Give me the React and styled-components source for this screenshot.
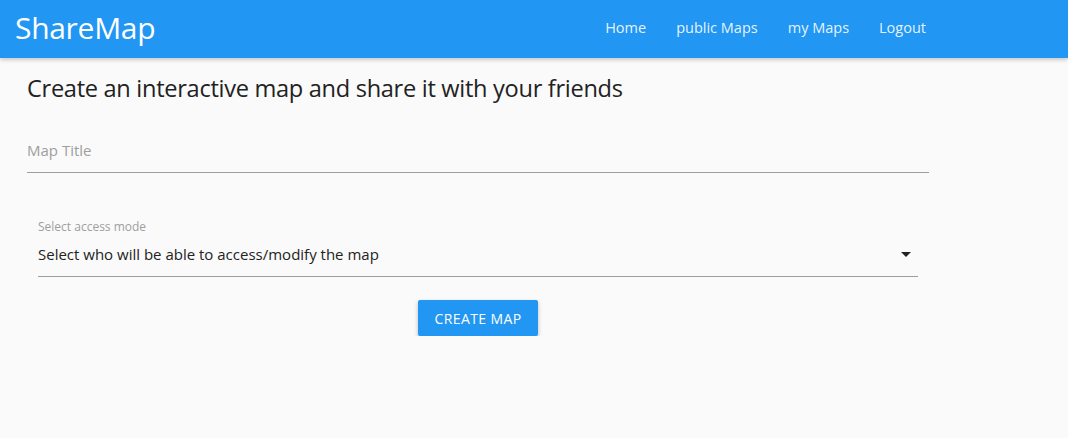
import React, { useState } from "react";
import styled, { createGlobalStyle } from "styled-components";

const GlobalStyle = createGlobalStyle`
	html, body {
		margin: 0;
		padding: 0;
		background: #fafafa;
		font-family: "Open Sans", "Noto Sans", sans-serif;
	}
`;

const AppBar = styled.header`
	height: 58px;
	background: #2196f3;
	display: flex;
	align-items: center;
	justify-content: space-between;
	padding: 0 127px 0 15px;
	box-shadow: 0 2px 4px rgba(0, 0, 0, 0.2);
`;

const Brand = styled.div`
	color: #fff;
	font-size: 30px;
	letter-spacing: -0.3px;
	line-height: 1;
	margin-top: -3px;
`;

const Nav = styled.nav`
	display: flex;
	align-items: center;
	margin-top: -4px;
`;

const NavLink = styled.a`
	color: rgba(255, 255, 255, 0.9);
	font-size: 14.5px;
	padding: 0 15px;
	text-decoration: none;
	cursor: pointer;
`;

const Main = styled.main`
	padding: 14px 0 0 27px;
	width: 902px;
`;

const Heading = styled.h1`
	margin: 0;
	font-size: 23.6px;
	font-weight: 400;
	color: #222;
	letter-spacing: -0.3px;
`;

const Form = styled.form`
	display: flex;
	flex-direction: column;
	margin-top: 29px;
`;

const TextField = styled.input`
	border: none;
	border-bottom: 1px solid #9e9e9e;
	background: transparent;
	font-family: inherit;
	font-size: 15px;
	color: #222;
	padding: 7px 0 12px;
	outline: none;
	&::placeholder {
		color: #9e9e9e;
	}
`;

const SelectBlock = styled.div`
	margin: 45px 11px 0;
	display: flex;
	flex-direction: column;
`;

const SelectLabel = styled.label`
	font-size: 12px;
	color: #9e9e9e;
`;

const SelectBox = styled.div`
	display: flex;
	align-items: center;
	justify-content: space-between;
	border-bottom: 1px solid #9e9e9e;
	padding: 7px 0 10px;
	font-size: 15px;
	color: #222;
	cursor: pointer;
`;

const Arrow = styled.svg`
	width: 24px;
	height: 24px;
	fill: #222;
`;

const ButtonRow = styled.div`
	display: flex;
	justify-content: center;
	margin-top: 23px;
`;

const Button = styled.button`
	background: #2196f3;
	color: #fff;
	border: none;
	border-radius: 2px;
	font-family: inherit;
	font-size: 14px;
	letter-spacing: 0.4px;
	height: 36px;
	padding: 0 16px;
	box-shadow: 0 2px 4px rgba(0, 0, 0, 0.25);
	cursor: pointer;
`;

const App = () => {
	const [title, setTitle] = useState("");
	return (
		<>
			<GlobalStyle />
			<AppBar>
				<Brand>ShareMap</Brand>
				<Nav>
					<NavLink>Home</NavLink>
					<NavLink>public Maps</NavLink>
					<NavLink>my Maps</NavLink>
					<NavLink>Logout</NavLink>
				</Nav>
			</AppBar>
			<Main>
				<Heading>Create an interactive map and share it with your friends</Heading>
				<Form onSubmit={(e) => e.preventDefault()}>
					<TextField
						placeholder="Map Title"
						value={title}
						onChange={(e) => setTitle(e.target.value)}
					/>
					<SelectBlock>
						<SelectLabel>Select access mode</SelectLabel>
						<SelectBox>
							<span>Select who will be able to access/modify the map</span>
							<Arrow viewBox="0 0 24 24">
								<path d="M7 10l5 5 5-5z" />
							</Arrow>
						</SelectBox>
					</SelectBlock>
					<ButtonRow>
						<Button type="submit">CREATE MAP</Button>
					</ButtonRow>
				</Form>
			</Main>
		</>
	);
};

export default App;
